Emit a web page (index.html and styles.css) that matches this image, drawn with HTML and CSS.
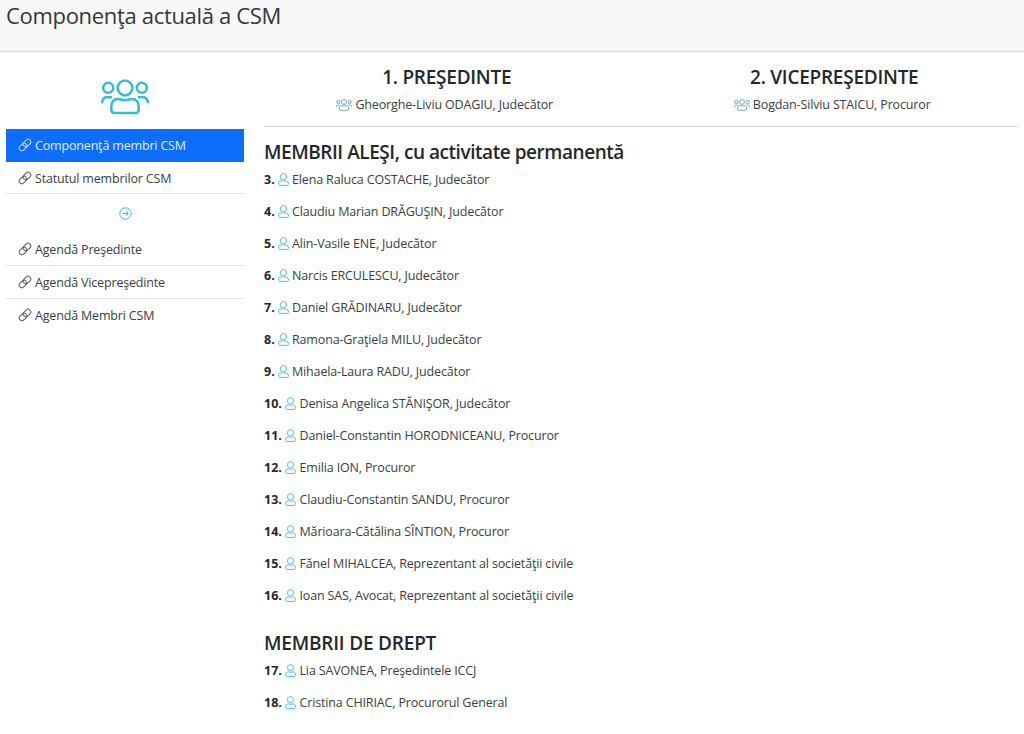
FILE: index.html
```
<!DOCTYPE html>
<html lang="en">
<head>
<meta charset="utf-8">
<title>Componenţa actuală a CSM</title>
<link rel="stylesheet" href="styles.css">
</head>
<body>
<svg class="defs" aria-hidden="true">
  <symbol id="people" viewBox="0 0 48 36"><g fill="none" stroke="currentColor"><circle cx="24" cy="9" r="7.400"/><circle cx="7.200" cy="8.800" r="5"/><circle cx="40.800" cy="8.800" r="5"/><path d="M17 19.900c2.500 0 3.500 1.300 7 1.300s4.500-1.300 7-1.300c4.700 0 6.700 3 6.700 8.300v2.500c0 2.200-1 3.200-3.200 3.200h-21c-2.200 0-3.200-1-3.200-3.200v-2.500c0-5.300 2-8.300 6.700-8.300zM1.200 24.200c0-3.700 1.700-5.900 5-5.900h4.800M46.800 24.200c0-3.700-1.700-5.900-5-5.900H37"/></g></symbol>
  <symbol id="person" viewBox="0 0 11 13"><g fill="none" stroke="currentColor"><circle cx="5.500" cy="3.700" r="3.100"/><path d="M3.400 7.900C1.400 7.900.6 9.200.6 11c0 1 .5 1.400 1.300 1.400h7.200c.8 0 1.300-.4 1.300-1.400 0-1.800-.8-3.100-2.800-3.100-.8.500-3.400.5-4.200 0z"/></g></symbol>
  <symbol id="link" viewBox="0 0 14 14"><g fill="none" stroke="currentColor"><rect x="-4.200" y="-2.700" width="8.400" height="5.400" rx="2.700" transform="translate(9 5) rotate(-45)"/><rect x="-4.200" y="-2.700" width="8.400" height="5.400" rx="2.700" transform="translate(5 9) rotate(-45)"/></g></symbol>
  <symbol id="arrow" viewBox="0 0 13 13"><g fill="none" stroke="currentColor"><circle cx="6.500" cy="6.500" r="5.700"/><path d="M3.500 6.500h5.700M7 4.100l2.400 2.400L7 8.900"/></g></symbol>
</svg>
<header class="page-header"><h1>Componenţa actuală a CSM</h1></header>
<div class="layout">
  <aside class="sidebar">
    <svg class="hero-icon"><use href="#people"/></svg>
    <nav>
      <a class="nav-item active"><svg class="link-icon"><use href="#link"/></svg><span>Componenţă membri CSM</span></a>
      <a class="nav-item short"><svg class="link-icon"><use href="#link"/></svg><span>Statutul membrilor CSM</span></a>
    </nav>
    <div class="separator"><svg class="arrow-icon"><use href="#arrow"/></svg></div>
    <nav>
      <a class="nav-item"><svg class="link-icon"><use href="#link"/></svg><span>Agendă Preşedinte</span></a>
      <a class="nav-item"><svg class="link-icon"><use href="#link"/></svg><span>Agendă Vicepreşedinte</span></a>
      <a class="nav-item last"><svg class="link-icon"><use href="#link"/></svg><span>Agendă Membri CSM</span></a>
    </nav>
  </aside>
  <main class="content">
    <section class="leaders">
      <div class="leader"><h2>1. PREŞEDINTE</h2><p><svg class="group-icon"><use href="#people"/></svg><span>Gheorghe-Liviu ODAGIU, Judecător</span></p></div>
      <div class="leader"><h2>2. VICEPREŞEDINTE</h2><p><svg class="group-icon"><use href="#people"/></svg><span>Bogdan-Silviu STAICU, Procuror</span></p></div>
    </section>
    <h2 class="section-title elected">MEMBRII ALEŞI, cu activitate permanentă</h2>
    <ul class="members">
      <li><b>3.</b><svg><use href="#person"/></svg><span>Elena Raluca COSTACHE, Judecător</span></li>
      <li><b>4.</b><svg><use href="#person"/></svg><span>Claudiu Marian DRĂGUŞIN, Judecător</span></li>
      <li><b>5.</b><svg><use href="#person"/></svg><span>Alin-Vasile ENE, Judecător</span></li>
      <li><b>6.</b><svg><use href="#person"/></svg><span>Narcis ERCULESCU, Judecător</span></li>
      <li><b>7.</b><svg><use href="#person"/></svg><span>Daniel GRĂDINARU, Judecător</span></li>
      <li><b>8.</b><svg><use href="#person"/></svg><span>Ramona-Graţiela MILU, Judecător</span></li>
      <li><b>9.</b><svg><use href="#person"/></svg><span>Mihaela-Laura RADU, Judecător</span></li>
      <li class="wide"><b>10.</b><svg><use href="#person"/></svg><span>Denisa Angelica STĂNIŞOR, Judecător</span></li>
      <li class="wide"><b>11.</b><svg><use href="#person"/></svg><span>Daniel-Constantin HORODNICEANU, Procuror</span></li>
      <li class="wide"><b>12.</b><svg><use href="#person"/></svg><span>Emilia ION, Procuror</span></li>
      <li class="wide"><b>13.</b><svg><use href="#person"/></svg><span>Claudiu-Constantin SANDU, Procuror</span></li>
      <li class="wide"><b>14.</b><svg><use href="#person"/></svg><span>Mărioara-Cătălina SÎNTION, Procuror</span></li>
      <li class="wide"><b>15.</b><svg><use href="#person"/></svg><span>Fănel MIHALCEA, Reprezentant al societăţii civile</span></li>
      <li class="wide"><b>16.</b><svg><use href="#person"/></svg><span>Ioan SAS, Avocat, Reprezentant al societăţii civile</span></li>
    </ul>
    <h2 class="section-title exofficio">MEMBRII DE DREPT</h2>
    <ul class="members">
      <li class="wide"><b>17.</b><svg><use href="#person"/></svg><span>Lia SAVONEA, Preşedintele ICCJ</span></li>
      <li class="wide"><b>18.</b><svg><use href="#person"/></svg><span>Cristina CHIRIAC, Procurorul General</span></li>
    </ul>
  </main>
</div>
</body>
</html>
```
FILE: styles.css
```
* { box-sizing: border-box; }
body {
  margin: 0;
  background: #fff;
  color: #3a3e42;
  font: 12.5px/20px "Open Sans", "Noto Sans", sans-serif;
  letter-spacing: -0.15px;
  white-space: nowrap;
  overflow: hidden;
}
h1, h2, p, ul { margin: 0; padding: 0; font-weight: normal; }
ul { list-style: none; }
svg { flex: none; }
.defs { display: none; }

.page-header {
  height: 52px;
  padding: 1px 6px;
  background: #f7f7f7;
  border-bottom: 1px solid #d8d8d8;
}
.page-header h1 { font-size: 22px; line-height: 29px; letter-spacing: -0.32px; color: #33373b; }

.layout { display: flex; gap: 20px; padding: 0 7px 0 6px; }

.sidebar { width: 238px; padding-top: 27px; letter-spacing: -0.17px; }
.hero-icon { display: block; width: 48px; height: 36px; margin: 0 auto 14px; color: #35bdd3; stroke-width: 2.500; }
.nav-item {
  display: flex;
  align-items: center;
  gap: 3px;
  height: 33px;
  padding: 0 12px;
  border-bottom: 1px solid #e4e4e4;
}
.nav-item span { padding-top: 2px; }
.nav-item.active { background: #0d6efd; border-color: #0d6efd; color: #e8f1ff; }
.nav-item.short { height: 32px; }
.nav-item.last { border-bottom-color: transparent; }
.link-icon { width: 14px; height: 14px; stroke-width: 1; opacity: 0.85; }
.separator { display: flex; justify-content: center; align-items: center; height: 39px; }
.arrow-icon { width: 13px; height: 13px; color: #35bdd3; }

.content { flex: 1; min-width: 0; }
.leaders {
  display: grid;
  grid-template-columns: 1fr 1fr;
  column-gap: 22px;
  height: 75px;
  padding-top: 11px;
  border-bottom: 1px solid #d2d2d2;
  text-align: center;
}
.leader h2, .section-title { font-size: 19px; line-height: 28px; font-weight: 600; letter-spacing: -0.25px; color: #24282c; }
.leader p { display: flex; justify-content: center; align-items: center; gap: 3px; height: 27px; padding-right: 4px; }
.group-icon { width: 16px; height: 12px; color: #6694b8; stroke-width: 2.600; }
.section-title.elected { margin-top: 11px; letter-spacing: -0.45px; }
.section-title.exofficio { margin-top: 18px; letter-spacing: -0.2px; }
.members { margin-top: -3px; }
.members li { display: flex; align-items: center; height: 32px; }
.members b, .members span { padding-top: 2px; }
.members b { width: 14px; font-weight: 700; letter-spacing: 0; color: #24282c; }
.members .wide b { width: 21px; }
.members .wide svg { margin-right: 3.500px; }
.members svg { width: 11px; height: 13px; margin-right: 3px; color: #45c5d9; stroke-width: 1; }
```
